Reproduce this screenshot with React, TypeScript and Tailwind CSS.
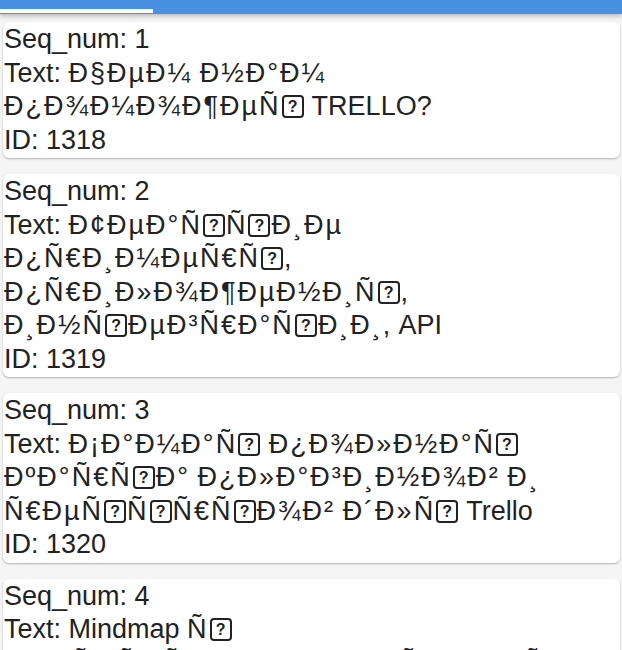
import React from "react"

interface Item {
  seq: number
  text: string
  id: number
}

// "@" marks a byte the device could not draw (shown as a boxed ?)
const items: Item[] = [
  { seq: 1, text: "Ð§ÐµÐ¼ Ð½Ð°Ð¼ Ð¿Ð¾Ð¼Ð¾Ð¶ÐµÑ@ TRELLO?", id: 1318 },
  { seq: 2, text: "Ð¢ÐµÐ°Ñ@Ñ@Ð¸Ðµ Ð¿Ñ€Ð¸Ð¼ÐµÑ€Ñ@, Ð¿Ñ€Ð¸Ð»Ð¾Ð¶ÐµÐ½Ð¸Ñ@, Ð¸Ð½Ñ@ÐµÐ³Ñ€Ð°Ñ@Ð¸Ð¸, API", id: 1319 },
  { seq: 3, text: "Ð¡Ð°Ð¼Ð°Ñ@ Ð¿Ð¾Ð»Ð½Ð°Ñ@ ÐºÐ°Ñ€Ñ@Ð° Ð¿Ð»Ð°Ð³Ð¸Ð½Ð¾Ð² Ð¸ Ñ€ÐµÑ@Ñ@Ñ€Ñ@Ð¾Ð² Ð´Ð»Ñ@ Trello", id: 1320 },
  { seq: 4, text: "Mindmap Ñ@ Ð´Ð°Ñ@Ñ@Ñ@Ð¾Ð²Ð°Ð½Ð¸Ñ@ Ð´Ð»Ñ@ Trello", id: 1321 },
]

function Missing() {
  return (
    <span className="mx-[1px] inline-block h-[23px] w-[22px] overflow-hidden rounded-[4px] border-2 border-[#222] text-center align-[-3px] text-[16px] font-bold leading-[19px] tracking-normal">
      ?
    </span>
  )
}

function renderWord(word: string) {
  const parts = word.split("@")
  const out: React.ReactNode[] = []
  parts.forEach((p, i) => {
    out.push(<React.Fragment key={`t${i}`}>{p}</React.Fragment>)
    if (i < parts.length - 1) out.push(<Missing key={`m${i}`} />)
  })
  return out
}

function renderText(text: string) {
  const words = text.split(" ")
  return words.map((w, i) => (
    <React.Fragment key={i}>
      <span className={/[^\x00-\x7f]/.test(w) ? "whitespace-nowrap tracking-[2px]" : "whitespace-nowrap"}>
        {renderWord(w)}
      </span>
      {i < words.length - 1 ? " " : null}
    </React.Fragment>
  ))
}

function Card({ item }: { item: Item }) {
  return (
    <div className="rounded-[6px] bg-white px-px py-px shadow-[0_1px_2px_rgba(0,0,0,0.28)]">
      <div>Seq_num: {item.seq}</div>
      <div>Text: {renderText(item.text)}</div>
      <div>ID: {item.id}</div>
    </div>
  )
}

export default function App() {
  return (
    <div className="min-h-screen bg-[#f5f5f5] font-['Liberation_Sans',Arial,sans-serif] text-[27px] leading-[33.5px] text-[#222]">
      <div className="relative z-10 flex h-[14px] flex-col justify-end bg-[#4a90e2] pb-px shadow-[0_2px_5px_rgba(0,0,0,0.25)]">
        <div className="h-[4px] w-[153px] bg-white" />
      </div>
      <div className="flex flex-col gap-4 pb-4 pl-[3px] pr-[2px] pt-2">
        {items.map((it) => (
          <Card key={it.seq} item={it} />
        ))}
      </div>
    </div>
  )
}
